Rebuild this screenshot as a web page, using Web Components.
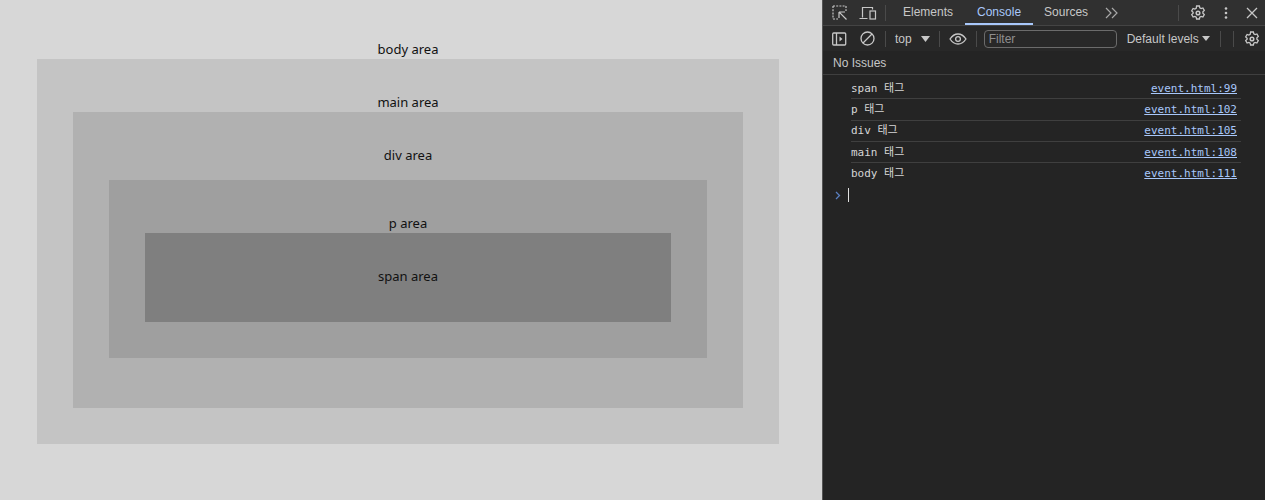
<!DOCTYPE html>
<html lang="ko">
<head>
<meta charset="utf-8">
<title>event.html</title>
<style>
html, body { margin: 0; height: 100%; overflow: hidden; }
body { display: flex; width: 1265px; height: 500px; font-family: "Noto Sans", "Noto Sans CJK KR", sans-serif; }
</style>
</head>
<body>
<page-pane>
  <nest-area label="body area" top="40" bottom="56" side="37" right="43" color="#d7d7d7">
    <nest-area label="main area" top="34" bottom="36" side="36" color="#c4c4c4">
      <nest-area label="div area" top="34" gap="15" bottom="50" side="36" color="#b1b1b1">
        <nest-area label="p area" top="34" bottom="36" side="36" color="#9f9f9f">
          <nest-area label="span area" top="34" bottom="36" side="0" color="#7f7f7f"></nest-area>
        </nest-area>
      </nest-area>
    </nest-area>
  </nest-area>
</page-pane>
<dev-tools>
  <log-row text="span" tag="태그" src="event.html:99"></log-row>
  <log-row text="p" tag="태그" src="event.html:102"></log-row>
  <log-row text="div" tag="태그" src="event.html:105"></log-row>
  <log-row text="main" tag="태그" src="event.html:108"></log-row>
  <log-row text="body" tag="태그" src="event.html:111" last></log-row>
</dev-tools>

<script>
const gear = `<svg width="16" height="16" viewBox="0 0 16 16" fill="none" stroke="#c7c7c7" stroke-width="1.3"><path d="M6.6 1h2.8l.4 1.9 1.3.7 1.8-.6 1.4 2.4-1.4 1.3v1.6l1.4 1.3-1.4 2.4-1.8-.6-1.3.7-.4 1.9H6.6l-.4-1.9-1.3-.7-1.8.6-1.4-2.4 1.4-1.3V7.2L1.7 5.9l1.4-2.4 1.8.6 1.3-.7z"/><circle cx="8" cy="8" r="1.8" stroke-width="1.5"/></svg>`;

class PagePane extends HTMLElement {
    constructor() {
        super();
        this.attachShadow({ mode: 'open' });
        this.shadowRoot.innerHTML = `
<style>
:host { display: block; width: 822px; height: 500px; flex: none; background: #d7d7d7; color: #111; }
</style>
<slot></slot>`;
    }
}

class NestArea extends HTMLElement {
    constructor() {
        super();
        this.attachShadow({ mode: 'open' });
    }

    connectedCallback() {
        const a = n => this.getAttribute(n);
        this.shadowRoot.innerHTML = `
<style>
:host { display: block; background: ${a('color')}; padding: ${a('top')}px ${a('right') || a('side')}px ${a('bottom')}px ${a('side')}px; }
.label { display: block; height: 19px; line-height: 19px; font-size: 13px; text-align: center; margin-bottom: ${a('gap') || 0}px; }
</style>
<span class="label">${a('label')}</span>
<slot></slot>`;
    }
}

class LogRow extends HTMLElement {
    constructor() {
        super();
        this.attachShadow({ mode: 'open' });
    }

    connectedCallback() {
        const a = n => this.getAttribute(n);
        this.shadowRoot.innerHTML = `
<style>
:host { display: flex; justify-content: space-between; align-items: center; height: 19.3px; margin: 0 24px 0 28px; padding: 1px 4px 0 0; color: #d6d6d6;
  font: 11px/14px "DejaVu Sans Mono", "Noto Sans CJK KR", monospace; border-bottom: ${this.hasAttribute('last') ? '0' : '1px solid #3f3f3f'}; }
a { color: #a8c7fa; text-decoration: underline; }
</style>
<span>${a('text')} ${a('tag')}</span><a>${a('src')}</a>`;
    }
}

class DevTools extends HTMLElement {
    constructor() {
        super();
        this.attachShadow({ mode: 'open' });
        this.shadowRoot.innerHTML = `
<style>
:host { display: flex; flex-direction: column; width: 443px; height: 500px; flex: none; box-sizing: border-box; border-left: 1px solid #555;
  background: #242424; color: #c7c7c7; font: 12px "Liberation Sans", sans-serif; white-space: nowrap; }
.tabs { display: flex; align-items: center; height: 25px; flex: none; background: #303030; border-bottom: 1px solid #444; padding-left: 9px; }
.tools { display: flex; align-items: center; height: 25px; flex: none; background: #282828; padding-left: 9px; }
.issues { display: flex; align-items: center; height: 23px; flex: none; padding-left: 10px; border-bottom: 1px solid #3f3f3f; }
.sep { width: 1px; height: 16px; background: #4a4a4a; flex: none; }
.tab { height: 25px; line-height: 24px; padding: 0 12px; }
.tab.on { color: #a8c7fa; box-shadow: inset 0 -2px 0 #a8c7fa; }
.tab.src { margin-left: -1px; }
svg { display: block; flex: none; }
.filter { width: 127px; height: 16px; line-height: 16px; margin-left: 7px; padding-left: 4px; border: 1px solid #6b6b6b; border-radius: 4px; color: #8f8f8f; }
.log { padding-top: 3px; }
.prompt { display: flex; align-items: center; gap: 7px; height: 20px; padding: 2px 0 0 12px; }
.caret { width: 1px; height: 14px; background: #e0e0e0; }
</style>
<div class="tabs">
  <svg width="16" height="16" viewBox="0 0 16 16" fill="none" stroke="#c7c7c7" stroke-width="1.2"><path d="M1 1h13M1 1v13M14 1v5M1 14h5" stroke-dasharray="2 1.2"/><path d="M7 7h6M7 7v6M7.2 7.2l7.3 7.3"/></svg>
  <svg style="margin-left:11px" width="18" height="16" viewBox="0 0 18 16" fill="none" stroke="#c7c7c7" stroke-width="1.2"><path d="M3.5 12.5V2.5h10v2M.5 13.5h8"/><rect x="11" y="6" width="5.5" height="8"/></svg>
  <div class="sep" style="margin:0 5px 0 8px"></div>
  <div class="tab">Elements</div><div class="tab on">Console</div><div class="tab src">Sources</div>
  <svg style="margin-left:5px" width="13" height="12" viewBox="0 0 13 12" fill="none" stroke="#a8a8a8" stroke-width="1.2"><path d="M1 1l5 5-5 5M7 1l5 5-5 5"/></svg>
  <div class="sep" style="margin-left:auto"></div>
  <span style="margin-left:11px">${gear}</span>
  <svg style="margin-left:18px" width="4" height="14" viewBox="0 0 4 14" fill="#c7c7c7"><circle cx="2" cy="2.5" r="1.3"/><circle cx="2" cy="7" r="1.3"/><circle cx="2" cy="11.5" r="1.3"/></svg>
  <svg style="margin:0 7px 0 18px" width="12" height="12" viewBox="0 0 12 12" fill="none" stroke="#c7c7c7" stroke-width="1.3"><path d="M1 1l10 10M11 1L1 11"/></svg>
</div>
<div class="tools">
  <svg width="15" height="14" viewBox="0 0 15 14" fill="none" stroke="#c7c7c7" stroke-width="1.3"><rect x=".7" y="1" width="13" height="12" rx="1"/><path d="M4.5 1v12"/><path d="M7.5 4.5L10.5 7l-3 2.5z" fill="#c7c7c7" stroke="none"/></svg>
  <svg style="margin-left:13px" width="15" height="15" viewBox="0 0 15 15" fill="none" stroke="#c7c7c7" stroke-width="1.3"><circle cx="7.5" cy="7.5" r="6.5"/><path d="M3 12L12 3"/></svg>
  <div class="sep" style="margin:0 9px 0 10px"></div>
  <span>top</span>
  <svg style="margin-left:9px" width="9" height="6" viewBox="0 0 9 6" fill="#c7c7c7"><path d="M0 0h9L4.5 6z"/></svg>
  <div class="sep" style="margin:0 9px"></div>
  <svg width="18" height="12" viewBox="0 0 18 12" fill="none" stroke="#c7c7c7" stroke-width="1.3"><path d="M1 6c2-3 5-5 8-5s6 2 8 5c-2 3-5 5-8 5S3 9 1 6z"/><circle cx="9" cy="6" r="2.4"/></svg>
  <div class="sep" style="margin-left:9px"></div>
  <div class="filter">Filter</div>
  <span style="margin-left:10px">Default levels</span>
  <svg style="margin-left:3px" width="8" height="5" viewBox="0 0 8 5" fill="#c7c7c7"><path d="M0 0h8L4 5z"/></svg>
  <div class="sep" style="margin-left:10px"></div>
  <div class="sep" style="margin-left:12px"></div>
  <span style="margin-left:10px">${gear}</span>
</div>
<div class="issues">No Issues</div>
<div class="log"><slot></slot></div>
<div class="prompt">
  <svg width="6" height="9" viewBox="0 0 6 9" fill="none" stroke="#5a7fc0" stroke-width="1.3"><path d="M1 1l3.5 3.5L1 8"/></svg>
  <div class="caret"></div>
</div>`;
    }
}

customElements.define('page-pane', PagePane);
customElements.define('nest-area', NestArea);
customElements.define('log-row', LogRow);
customElements.define('dev-tools', DevTools);
</script>
</body>
</html>
